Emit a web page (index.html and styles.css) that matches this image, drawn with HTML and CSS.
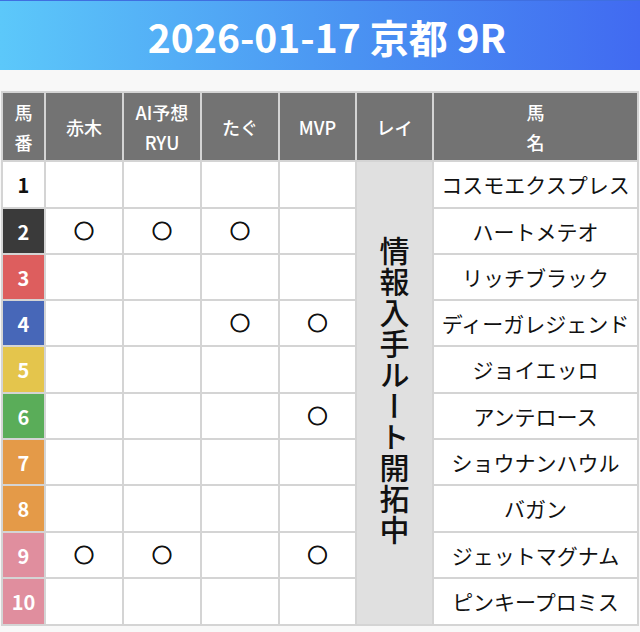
FILE: index.html
```html
<!DOCTYPE html>
<html lang="ja">
<head>
<meta charset="utf-8">
<title>2026-01-17 京都 9R</title>
<link rel="stylesheet" href="styles.css">
</head>
<body>
<header class="race-header">
  <h1 class="race-title">2026-01-17 京都 9R</h1>
</header>
<main class="content">
  <table class="pred-table">
    <colgroup>
      <col class="c-num"><col class="c-mark"><col class="c-mark"><col class="c-mark"><col class="c-mark2"><col class="c-mark2"><col class="c-name">
    </colgroup>
    <thead>
      <tr>
        <th>馬<br>番</th>
        <th>赤木</th>
        <th>AI予想<br>RYU</th>
        <th>たぐ</th>
        <th>MVP</th>
        <th>レイ</th>
        <th>馬<br>名</th>
      </tr>
    </thead>
    <tbody>
      <tr class="tall"><td class="num w1">1</td><td></td><td></td><td></td><td></td><td class="rei" rowspan="10"><span class="rei-text">情報入手ルート開拓中</span></td><td class="name">コスモエクスプレス</td></tr>
      <tr><td class="num w2">2</td><td class="mark">○</td><td class="mark">○</td><td class="mark">○</td><td></td><td class="name">ハートメテオ</td></tr>
      <tr><td class="num w3">3</td><td></td><td></td><td></td><td></td><td class="name">リッチブラック</td></tr>
      <tr><td class="num w4">4</td><td></td><td></td><td class="mark">○</td><td class="mark">○</td><td class="name">ディーガレジェンド</td></tr>
      <tr class="tall"><td class="num w5">5</td><td></td><td></td><td></td><td></td><td class="name">ジョイエッロ</td></tr>
      <tr><td class="num w6">6</td><td></td><td></td><td></td><td class="mark">○</td><td class="name">アンテロース</td></tr>
      <tr><td class="num w7">7</td><td></td><td></td><td></td><td></td><td class="name">ショウナンハウル</td></tr>
      <tr class="tall"><td class="num w7">8</td><td></td><td></td><td></td><td></td><td class="name">バガン</td></tr>
      <tr><td class="num w8">9</td><td class="mark">○</td><td class="mark">○</td><td></td><td class="mark">○</td><td class="name">ジェットマグナム</td></tr>
      <tr class="tall"><td class="num w8">10</td><td></td><td></td><td></td><td></td><td class="name">ピンキープロミス</td></tr>
    </tbody>
  </table>
</main>
</body>
</html>
```

FILE: styles.css
```css
html, body {
  margin: 0;
  padding: 0;
}
body {
  background: #f8f8f8;
  font-family: "Noto Sans CJK JP", "Noto Sans", sans-serif;
  color: #111;
  width: 640px;
}
.race-header {
  height: 69px;
  border-top: 1px solid #3f6fe0;
  background: linear-gradient(90deg, #5cc8fa 0%, #4a93f2 55%, #416af1 100%);
  display: flex;
  align-items: center;
  justify-content: center;
}
.race-title {
  margin: 0;
  color: #fff;
  font-size: 39px;
  font-weight: 700;
  letter-spacing: 0;
  line-height: 1;
  padding-left: 14px;
  padding-top: 2px;
}
.content {
  padding: 21px 0 0 1px;
}
.pred-table {
  border-collapse: separate;
  border-spacing: 2px;
  background: #d4d4d4;
  table-layout: fixed;
  width: 638px;
}
.c-num { width: 41px; }
.c-mark { width: 76px; }
.c-mark2 { width: 75px; }
.c-name { width: 203px; }
.pred-table th {
  background: #737373;
  color: #fff;
  font-size: 18px;
  font-weight: 500;
  line-height: 30px;
  height: 67px;
  padding: 0;
  text-align: center;
  vertical-align: middle;
}
.pred-table td {
  background: #fff;
  height: 44px;
  padding: 0;
  text-align: center;
  vertical-align: middle;
}
.pred-table tr.tall td {
  height: 45px;
}
.num {
  font-size: 20px;
  font-weight: 600;
  color: #fff;
}
.w1 { background: #fff !important; color: #111; }
.w2 { background: #3a3a3a !important; }
.w3 { background: #dd5e5e !important; }
.w4 { background: #4767b8 !important; }
.w5 { background: #e4c54c !important; }
.w6 { background: #5aad59 !important; }
.w7 { background: #e49a48 !important; }
.w8 { background: #e08e9e !important; }
.mark {
  font-size: 20px;
  font-weight: 700;
  line-height: 1;
  -webkit-text-stroke: 0.9px #111;
}
.name {
  font-size: 21px;
  line-height: 1;
}
.pred-table td.rei {
  background: #e0e0e0;
  height: auto !important;
}
.rei-text {
  display: inline-block;
  writing-mode: vertical-rl;
  text-orientation: upright;
  font-size: 30px;
  font-weight: 500;
  line-height: 1;
  letter-spacing: 1px;
}
```
